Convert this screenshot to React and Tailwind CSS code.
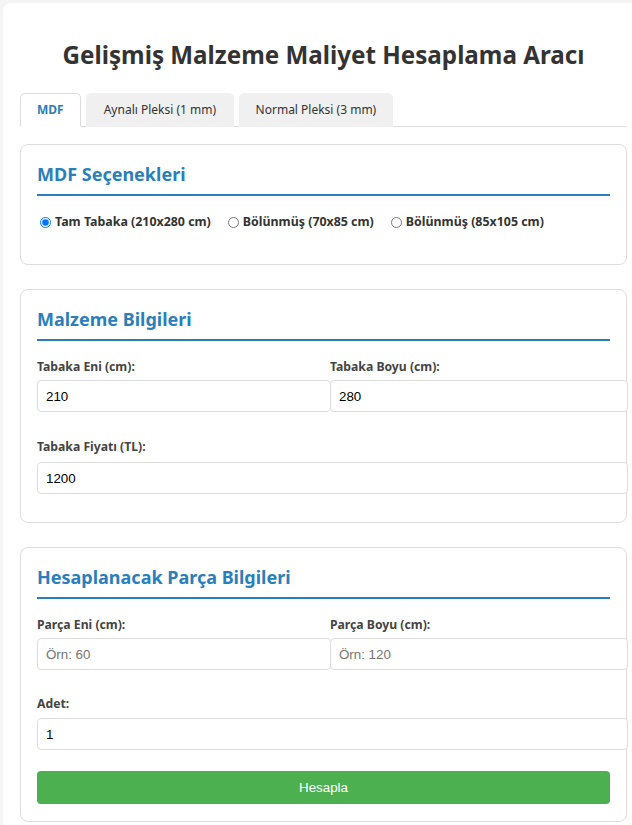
import React, { useState } from 'react';

const TABS = [
  { label: 'MDF', pad: 'px-[16px]' },
  { label: 'Aynalı Pleksi (1 mm)', pad: 'px-[18px]' },
  { label: 'Normal Pleksi (3 mm)', pad: 'px-[16.5px]' },
];

const MDF_OPTIONS = [
  { id: 'tam', label: 'Tam Tabaka (210x280 cm)' },
  { id: 'b1', label: 'Bölünmüş (70x85 cm)' },
  { id: 'b2', label: 'Bölünmüş (85x105 cm)' },
];

function Card({ title, children, className = '' }) {
  return (
    <div className={`bg-white border border-[#ddd] rounded-lg p-4 ${className}`}>
      <h2 className="text-[18px] leading-[26px] font-bold text-[#2a7fba] pb-[7px] border-b-2 border-[#2a7fba]">
        {title}
      </h2>
      {children}
    </div>
  );
}

function Field({ label, value, placeholder, labelGap = 'mb-[5px]' }) {
  return (
    <div>
      <label className={`block text-[12.2px] leading-[16px] font-bold text-[#444] ${labelGap}`}>{label}</label>
      <input
        type="text"
        defaultValue={value}
        placeholder={placeholder}
        className="block w-[calc(100%+18px)] h-[32px] px-2 border border-[#ddd] rounded-[4px] bg-white text-[13.33px] text-black placeholder:text-[#757575] outline-none"
        style={{ fontFamily: '"Liberation Sans", Arial, sans-serif' }}
      />
    </div>
  );
}

export default function App() {
  const [tab, setTab] = useState(0);
  const [option, setOption] = useState('tam');

  return (
    <div className="min-h-screen bg-[#f4f4f4] pt-[3px] pl-[3px] overflow-hidden font-['Noto_Sans',sans-serif] text-[#333]">
      <div className="w-[641px] bg-white rounded-lg px-[17px] pt-[17px] pb-6">
        <h1 className="mt-5 mb-[23px] text-center text-[24.2px] leading-[30px] font-bold text-[#333]">
          Gelişmiş Malzeme Maliyet Hesaplama Aracı
        </h1>

        {/* Tabs */}
        <div className="flex gap-[5px] border-b border-[#ddd]">
          {TABS.map((t, i) => (
            <button
              key={t.label}
              onClick={() => setTab(i)}
              className={`h-[34px] text-[12px] rounded-t-[5px] -mb-px ${t.pad} ${
                tab === i
                  ? 'bg-white border border-[#ddd] border-b-white font-bold text-[#2a7fba]'
                  : 'bg-[#f0f0f0] text-[#333]'
              }`}
            >
              {t.label}
            </button>
          ))}
        </div>

        <Card title="MDF Seçenekleri" className="mt-[17px]">
          <div className="flex items-center gap-[17px] mt-[17px] mb-[17px] h-[18px] pl-[3px]">
            {MDF_OPTIONS.map((o) => (
              <label key={o.id} className="flex items-center gap-[4px] text-[12.4px] font-bold text-[#333] cursor-pointer">
                <input
                  type="radio"
                  name="mdf"
                  checked={option === o.id}
                  onChange={() => setOption(o.id)}
                  className="w-[11px] h-[11px] m-0"
                />
                {o.label}
              </label>
            ))}
          </div>
        </Card>

        <Card title="Malzeme Bilgileri" className="mt-[24px]">
          <div className="grid grid-cols-[276px_1fr] gap-x-[17px] mt-[18px]">
            <Field label="Tabaka Eni (cm):" value="210" />
            <Field label="Tabaka Boyu (cm):" value="280" />
          </div>
          <div className="mt-[27px] mb-[12px]">
            <Field label="Tabaka Fiyatı (TL):" value="1200" labelGap="mb-[7px]" />
          </div>
        </Card>

        <Card title="Hesaplanacak Parça Bilgileri" className="mt-[24px]">
          <div className="grid grid-cols-[276px_1fr] gap-x-[17px] mt-[18px]">
            <Field label="Parça Eni (cm):" placeholder="Örn: 60" />
            <Field label="Parça Boyu (cm):" placeholder="Örn: 120" />
          </div>
          <div className="mt-[26px]">
            <Field label="Adet:" value="1" labelGap="mb-[6px]" />
          </div>
          <button
            className="mt-[21px] mb-px w-full h-[33px] rounded-[4px] bg-[#4caf50] text-white text-[13.33px]"
            style={{ fontFamily: '"Liberation Sans", Arial, sans-serif' }}
          >
            Hesapla
          </button>
        </Card>
      </div>
    </div>
  );
}
